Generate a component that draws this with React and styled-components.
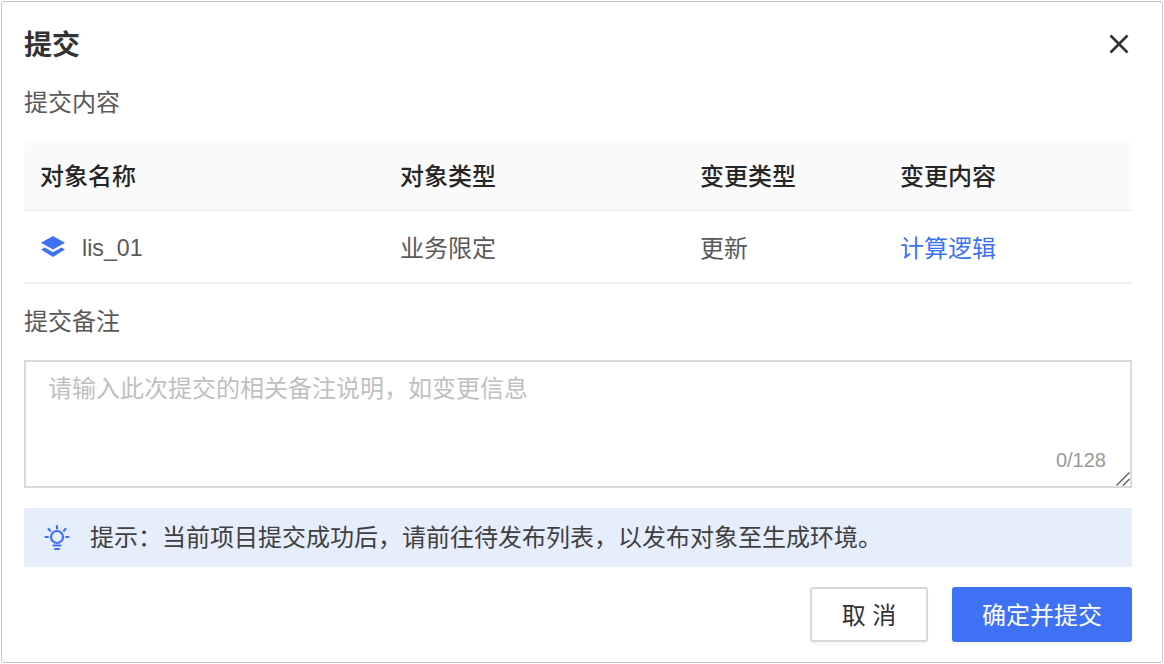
import React from 'react';
import styled, { createGlobalStyle } from 'styled-components';

const GlobalStyle = createGlobalStyle`
  html, body {
    margin: 0;
    padding: 0;
    background: #fff;
  }
  * {
    box-sizing: border-box;
  }
`;

const FONT = '"Liberation Sans", "Noto Sans CJK SC", sans-serif';

const Dialog = styled.div`
  width: 1162px;
  height: 662px;
  margin: 1px 0 0 1px;
  padding: 0 30px 0 22px;
  background: #fff;
  border: 1px solid #c8c8c8;
  border-radius: 3px;
  font-family: ${FONT};
  font-size: 24px;
  color: #595959;
  display: flex;
  flex-direction: column;
`;

const Header = styled.div`
  height: 84px;
  display: flex;
  align-items: center;
  justify-content: space-between;
`;

const Title = styled.h1`
  margin: 0;
  padding-top: 4px;
  font-size: 28px;
  line-height: 80px;
  font-weight: 700;
  color: #333;
`;

const CloseButton = styled.button`
  width: 24px;
  height: 24px;
  padding: 0;
  margin-right: 1px;
  border: 0;
  background: none;
  color: #333;
  display: flex;
`;

const SectionLabel = styled.div`
  height: 36px;
  line-height: 34px;
  color: #595959;
`;

const Table = styled.div`
  margin-top: 19px;
  width: 1108px;
`;

const Row = styled.div`
  display: grid;
  grid-template-columns: 360px 300px 200px 1fr;
  align-items: center;
  padding-left: 16px;
  border-bottom: 2px solid #f0f0f0;
`;

const HeadRow = styled(Row)`
  height: 70px;
  padding-bottom: 2px;
  background: #fafafa;
  border-radius: 8px 8px 0 0;
  color: #262626;
  font-weight: 500;
`;

const BodyRow = styled(Row)`
  height: 73px;
`;

const NameCell = styled.div`
  display: flex;
  align-items: center;
  gap: 16px;
`;

const NameText = styled.span`
  padding-top: 3px;
  font-size: 23.2px;
`;

const LinkText = styled.a`
  color: #3f71f5;
`;

const NoteLabel = styled(SectionLabel)`
  margin-top: 21px;
`;

const NoteBox = styled.div`
  position: relative;
  margin-top: 19px;
  width: 1108px;
  height: 128px;
`;

const NoteInput = styled.textarea`
  display: block;
  width: 100%;
  height: 100%;
  padding: 9px 22px;
  border: 2px solid #d9d9d9;
  outline: none;
  resize: none;
  font-family: ${FONT};
  font-size: 24px;
  line-height: 36px;
  color: #595959;
  &::placeholder {
    color: #bfbfbf;
  }
`;

const Counter = styled.span`
  position: absolute;
  right: 26px;
  bottom: 16px;
  font-size: 20px;
  line-height: 24px;
  color: #999;
`;

const ResizeGrip = styled.svg`
  position: absolute;
  right: 2px;
  bottom: 2px;
  pointer-events: none;
`;

const Tip = styled.div`
  margin-top: 20px;
  width: 1108px;
  height: 59px;
  padding-left: 20px;
  background: #e6eefc;
  color: #404040;
  display: flex;
  align-items: center;
  gap: 20px;
`;

const TipText = styled.span`
  padding-bottom: 5px;
`;

const Footer = styled.div`
  margin-top: 20px;
  width: 1108px;
  display: flex;
  justify-content: flex-end;
  gap: 24px;
`;

const Button = styled.button`
  height: 55px;
  width: ${(p) => p.$width}px;
  padding: 0 0 2px;
  border-radius: 3px;
  font-family: ${FONT};
  font-size: 24px;
  box-shadow: 0 3px 3px rgba(0, 0, 0, 0.03);
  border: ${(p) => (p.$primary ? '0' : '2px solid #d9d9d9')};
  background: ${(p) => (p.$primary ? '#3f71f5' : '#fff')};
  color: ${(p) => (p.$primary ? '#fff' : '#333')};
`;

function LayersIcon() {
  return (
    <svg width="26" height="24" viewBox="0 0 26 24" fill="#3f71f5">
      <path d="M13 1 25 7.8 13 14.6 1 7.8z" />
      <path d="M4.6 12.4 13 17.2l8.4-4.8 3.6 2.2L13 22 1 14.6z" />
    </svg>
  );
}

function CloseIcon() {
  return (
    <svg width="24" height="24" viewBox="0 0 24 24" fill="none" stroke="currentColor" strokeWidth="2.6">
      <path d="M3.5 3.5l17 17M20.5 3.5l-17 17" />
    </svg>
  );
}

function BulbIcon() {
  return (
    <svg width="26" height="28" viewBox="0 0 26 28" fill="none" stroke="#3f71f5" strokeWidth="2.2" strokeLinecap="round">
      <circle cx="13" cy="13" r="6" />
      <path d="M13 2v2.5M4.5 5l1.6 1.8M21.5 5l-1.6 1.8M1.5 13h2.4M22.1 13h2.4" />
      <path d="M9.5 21.5h7M11 25h4" />
    </svg>
  );
}

export default function App() {
  return (
    <>
      <GlobalStyle />
      <Dialog>
        <Header>
          <Title>提交</Title>
          <CloseButton>
            <CloseIcon />
          </CloseButton>
        </Header>
        <SectionLabel>提交内容</SectionLabel>
        <Table>
          <HeadRow>
            <div>对象名称</div>
            <div>对象类型</div>
            <div>变更类型</div>
            <div>变更内容</div>
          </HeadRow>
          <BodyRow>
            <NameCell>
              <LayersIcon />
              <NameText>lis_01</NameText>
            </NameCell>
            <div>业务限定</div>
            <div>更新</div>
            <LinkText>计算逻辑</LinkText>
          </BodyRow>
        </Table>
        <NoteLabel>提交备注</NoteLabel>
        <NoteBox>
          <NoteInput placeholder="请输入此次提交的相关备注说明，如变更信息" />
          <Counter>0/128</Counter>
          <ResizeGrip width="14" height="14" viewBox="0 0 14 14" fill="none" stroke="#555" strokeWidth="1.2">
            <path d="M0.5 13.5 13.5 0.5M7 13.5 13.5 7" />
          </ResizeGrip>
        </NoteBox>
        <Tip>
          <BulbIcon />
          <TipText>提示：当前项目提交成功后，请前往待发布列表，以发布对象至生成环境。</TipText>
        </Tip>
        <Footer>
          <Button $width={118}>取 消</Button>
          <Button $width={180} $primary>确定并提交</Button>
        </Footer>
      </Dialog>
    </>
  );
}
